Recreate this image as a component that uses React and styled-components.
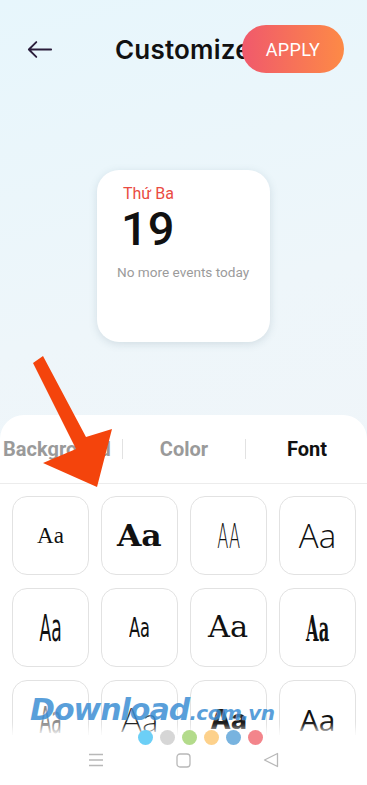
import styled, { createGlobalStyle } from "styled-components";

const Global = createGlobalStyle`
  html, body { margin: 0; padding: 0; }
  body { font-family: Roboto, "Noto Sans", sans-serif; background: #fff; }
`;

const fonts = [
  { family: '"Liberation Serif", serif', size: 23, weight: 400 },
  { family: '"DejaVu Serif", serif', size: 30, weight: 900, sx: 1.05 },
  { family: '"DejaVu Sans", sans-serif', size: 34, weight: 300, sx: 0.48, text: "AA" },
  { family: '"Open Sans", sans-serif', size: 33, weight: 300 },
  { family: '"DejaVu Sans", sans-serif', size: 38, weight: 400, sx: 0.45 },
  { family: '"DejaVu Sans", sans-serif', size: 27, weight: 400, sx: 0.6 },
  { family: '"DejaVu Serif", serif', size: 29, weight: 400, sx: 1.05 },
  { family: '"DejaVu Serif", serif', size: 36, weight: 700, sx: 0.45 },
  { family: '"DejaVu Sans", sans-serif', size: 38, weight: 400, sx: 0.45, grey: true },
  { family: 'Lato, sans-serif', size: 33, weight: 300 },
  { family: 'Inter, sans-serif', size: 27, weight: 800 },
  { family: '"Open Sans", sans-serif', size: 30, weight: 400 },
];

const dots = ["#6ccff6", "#d6d6d6", "#b3db8b", "#fdd18b", "#78b3df", "#f3858b"];

export default function App() {
  return (
    <Screen>
      <Global />
      <Header>
        <Back viewBox="0 0 28 20">
          <path d="M26 10H2M10 2L2 10l8 8" fill="none" stroke="#2a1d3b" strokeWidth="2" strokeLinecap="round" strokeLinejoin="round" />
        </Back>
        <Title>Customize</Title>
        <Apply>APPLY</Apply>
      </Header>

      <Preview>
        <Widget>
          <Day>Thứ Ba</Day>
          <Date>19</Date>
          <Events>No more events today</Events>
        </Widget>
      </Preview>

      <Sheet>
        <Tabs>
          <Tab>Background</Tab>
          <Tab divider>Color</Tab>
          <Tab divider active>Font</Tab>
        </Tabs>
        <Grid>
          {fonts.map((f, i) => (
            <Cell key={i}>
              <Sample
                grey={f.grey}
                style={{
                  fontFamily: f.family,
                  fontSize: f.size,
                  fontWeight: f.weight,
                  transform: `scaleX(${f.sx || 1})`,
                }}
              >
                {f.text || "Aa"}
              </Sample>
            </Cell>
          ))}
        </Grid>
      </Sheet>

      <NavBar>
        <svg width="16" height="14" viewBox="0 0 16 14">
          <path d="M1 1.5h14M1 7h14M1 12.5h14" stroke="#b8b8b8" strokeWidth="1.3" />
        </svg>
        <svg width="15" height="15" viewBox="0 0 15 15">
          <rect x="1" y="1" width="13" height="13" rx="3" fill="none" stroke="#b8b8b8" strokeWidth="1.3" />
        </svg>
        <svg width="16" height="16" viewBox="0 0 16 16">
          <path d="M14.5 1.5v13L1.5 8z" fill="none" stroke="#b8b8b8" strokeWidth="1.3" strokeLinejoin="round" />
        </svg>
      </NavBar>

      <Arrow viewBox="0 0 367 785">
        <path d="M33 363 L43 356 L86 437 L112 429 L97 487 L43 463 L76 449 Z" fill="#f4440c" />
      </Arrow>

      <Watermark>
        <Brand>Download</Brand><Domain>.com.vn</Domain>
      </Watermark>
      <Dots>
        {dots.map((c) => (
          <Dot key={c} color={c} />
        ))}
      </Dots>
    </Screen>
  );
}

const Screen = styled.div`
  position: relative;
  width: 367px;
  height: 785px;
  overflow: hidden;
  display: flex;
  flex-direction: column;
  background: linear-gradient(165deg, #e7f6fc 0%, #eef6fa 40%, #f2f4f8 100%);
`;

const Header = styled.div`
  position: relative;
  flex-shrink: 0;
  height: 98px;
  display: flex;
  align-items: center;
  padding-left: 27px;
  box-sizing: border-box;
`;

const Back = styled.svg`
  width: 26px;
  height: 19px;
`;

const Title = styled.div`
  margin-left: 62px;
  font-family: Inter, Roboto, sans-serif;
  font-size: 26px;
  font-weight: 600;
  color: #111;
  letter-spacing: 0.2px;
  white-space: nowrap;
`;

const Apply = styled.button`
  position: absolute;
  top: 25px;
  right: 23px;
  width: 102px;
  height: 48px;
  border: none;
  border-radius: 24px;
  background: linear-gradient(90deg, #f0596c, #fd8a46);
  color: #fff;
  font-family: Roboto, sans-serif;
  font-size: 18px;
  font-weight: 400;
  letter-spacing: 0.3px;
`;

const Preview = styled.div`
  flex-shrink: 0;
  height: 317px;
  padding-top: 72px;
  box-sizing: border-box;
  display: flex;
  justify-content: center;
`;

const Widget = styled.div`
  width: 173px;
  height: 172px;
  box-sizing: border-box;
  padding: 14px 0 0 26px;
  background: #fff;
  border-radius: 22px;
  box-shadow: 0 2px 8px rgba(80, 110, 130, 0.18);
  display: flex;
  flex-direction: column;
`;

const Day = styled.div`
  font-family: Roboto, sans-serif;
  font-size: 16px;
  color: #ea4b42;
  line-height: 20px;
`;

const Date = styled.div`
  font-family: Roboto, sans-serif;
  font-size: 47px;
  font-weight: 500;
  color: #111;
  line-height: 46px;
  margin-top: 2px;
  margin-left: -2px;
`;

const Events = styled.div`
  margin-top: 12px;
  margin-left: -6px;
  font-family: Roboto, sans-serif;
  font-size: 13.6px;
  color: #9b9b9b;
  white-space: nowrap;
`;

const Sheet = styled.div`
  flex: 1;
  background: #fff;
  border-radius: 24px 24px 0 0;
  overflow: hidden;
  display: flex;
  flex-direction: column;
`;

const Tabs = styled.div`
  flex-shrink: 0;
  display: grid;
  grid-template-columns: 130px 123px 123px;
  margin-left: -8px;
  height: 69px;
  align-items: center;
  border-bottom: 1px solid #ececec;
  box-sizing: border-box;
`;

const Tab = styled.div`
  text-align: center;
  font-family: Roboto, sans-serif;
  font-size: 20px;
  font-weight: 700;
  color: ${(p) => (p.active ? "#111" : "#9a9a9a")};
  border-left: ${(p) => (p.divider ? "1px solid #e2e2e2" : "none")};
  line-height: 20px;
  white-space: nowrap;
`;

const Grid = styled.div`
  flex-shrink: 0;
  display: grid;
  grid-template-columns: repeat(4, 77px);
  grid-auto-rows: 79px;
  column-gap: 12px;
  row-gap: 13px;
  padding: 12px 0 0 12px;
`;

const Cell = styled.div`
  border: 1px solid #e2e2e2;
  border-radius: 15px;
  display: flex;
  align-items: center;
  justify-content: center;
  overflow: hidden;
`;

const Sample = styled.span`
  color: ${(p) => (p.grey ? "#8a8a8a" : "#111")};
  display: inline-block;
  line-height: 1;
`;

const NavBar = styled.div`
  height: 50px;
  flex-shrink: 0;
  background: #fff;
  display: flex;
  align-items: center;
  justify-content: center;
  gap: 72px;
  box-shadow: 0 -6px 8px rgba(255, 255, 255, 0.9);
  position: relative;
`;

const Arrow = styled.svg`
  position: absolute;
  left: 0;
  top: 0;
  width: 367px;
  height: 785px;
  pointer-events: none;
`;

const Watermark = styled.div`
  position: absolute;
  left: 30px;
  top: 692px;
  font-family: "DejaVu Sans", sans-serif;
  font-style: italic;
  font-weight: 700;
  color: #3d8fd4;
  opacity: 0.85;
  white-space: nowrap;
  text-shadow: 0 0 2px #fff;
`;

const Brand = styled.span`
  font-size: 30px;
  letter-spacing: -1px;
`;

const Domain = styled.span`
  font-size: 20px;
  letter-spacing: -0.5px;
`;

const Dots = styled.div`
  position: absolute;
  left: 138px;
  top: 730px;
  display: flex;
  gap: 7px;
`;

const Dot = styled.div`
  width: 15px;
  height: 15px;
  border-radius: 50%;
  background: ${(p) => p.color};
`;
